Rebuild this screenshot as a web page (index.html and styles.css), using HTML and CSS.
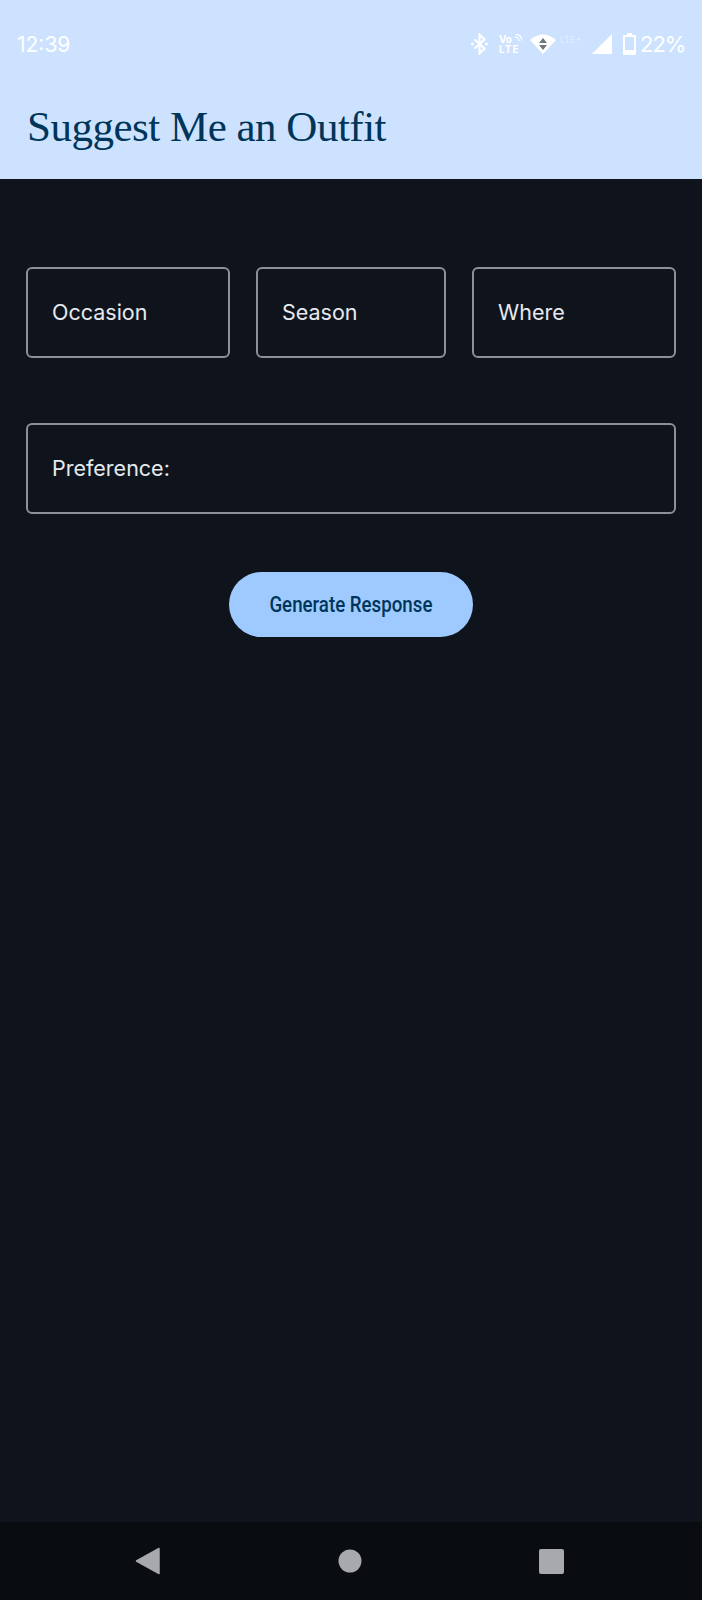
FILE: index.html
```html
<!DOCTYPE html>
<html lang="en">
<head>
  <meta charset="UTF-8">
  <title>Suggest Me an Outfit</title>
  <link rel="stylesheet" href="styles.css">
</head>
<body>

  <header class="app-header">
    <div class="status-bar">
      <span class="clock">12:39</span>
      <div class="status-icons">
        <svg class="icon-bt" width="17" height="22" viewBox="0 0 17 22"><path d="M3.500 6.500l10 9L8.500 20.500V1.500l5 5-10 9" fill="none" stroke="#fff" stroke-width="2.200"/><circle cx="1.500" cy="11" r="1.500" fill="#fff"/><circle cx="15.500" cy="11" r="1.500" fill="#fff"/></svg>
        <div class="volte">
          <span>Vo</span>
          <svg class="volte-arcs" width="8" height="8" viewBox="0 0 8 8"><path d="M1 3a4 4 0 0 1 4 4M1 0a7 7 0 0 1 7 7" fill="none" stroke="#fff" stroke-width="1.300"/></svg>
          <span class="volte-lte">LTE</span>
        </div>
        <svg class="icon-wifi" width="26" height="22" viewBox="0 0 26 22"><path d="M0 7Q13-4 26 7L13 21z" fill="#fff"/><path d="M13 5l4 5H9zM13 17l-4-5h8z" fill="#6f7780"/></svg>
        <span class="lte-small">LTE+</span>
        <svg class="icon-signal" width="20" height="22" viewBox="0 0 20 22"><path d="M20 1v20H0z" fill="#fff"/></svg>
        <svg class="icon-battery" width="13" height="22" viewBox="0 0 13 22"><path d="M4 0h5v2h3a1 1 0 0 1 1 1v18a1 1 0 0 1-1 1H1a1 1 0 0 1-1-1V3a1 1 0 0 1 1-1h3z" fill="#fff"/><rect x="2" y="4" width="9" height="13" fill="#cde2ff"/></svg>
        <span class="battery">22%</span>
      </div>
    </div>
    <h1>Suggest Me an Outfit</h1>
  </header>

  <main class="content">
    <div class="field-row">
      <div class="field field-occasion">Occasion</div>
      <div class="field field-season">Season</div>
      <div class="field field-where">Where</div>
    </div>
    <div class="field">Preference:</div>
    <button class="generate"><span class="generate-label">Generate Response</span></button>
  </main>

  <nav class="nav-bar">
    <svg width="26" height="28" viewBox="0 0 26 28"><path d="M24 1.500v25L1.500 14z" fill="#a7a9ad" stroke="#a7a9ad" stroke-width="1.500" stroke-linejoin="round"/></svg>
    <svg width="24" height="24" viewBox="0 0 24 24"><circle cx="12" cy="12" r="11.500" fill="#a7a9ad"/></svg>
    <svg width="25" height="25" viewBox="0 0 25 25"><rect width="25" height="25" rx="2" fill="#a7a9ad"/></svg>
  </nav>

</body>
</html>
```

FILE: styles.css
```css
* {
  box-sizing: border-box;
}
body {
  margin: 0;
  width: 702px;
  height: 1600px;
  display: flex;
  flex-direction: column;
  background-color: #0f141c;
  font-family: "Inter", sans-serif;
}
.app-header {
  height: 179px;
  padding: 30px 0 0;
  background-color: #cde2ff;
}
.status-bar {
  height: 28px;
  padding: 0 20px 0 17px;
  display: flex;
  justify-content: space-between;
  align-items: center;
}
.clock {
  font-size: 21px;
  color: #fff;
}
.status-icons {
  display: flex;
  align-items: center;
  color: #fff;
}
.volte {
  position: relative;
  width: 23px;
  margin-left: 11px;
  display: flex;
  flex-direction: column;
  font-size: 10px;
  line-height: 10px;
  font-weight: 700;
}
.volte-arcs {
  position: absolute;
  top: 0;
  right: 0;
}
.volte-lte {
  letter-spacing: 1px;
}
.icon-wifi {
  margin-left: 8px;
}
.lte-small {
  width: 26px;
  margin: 0 0 10px 4px;
  font-size: 9px;
  opacity: 0.45;
}
.icon-signal {
  margin-left: 6px;
}
.icon-battery {
  margin: 0 4px 0 11px;
}
.battery {
  width: 42px;
  font-size: 22px;
  letter-spacing: -1px;
}
h1 {
  margin: 44px 0 0 27px;
  font-family: "Liberation Serif", serif;
  font-weight: 400;
  font-size: 43px;
  line-height: 50px;
  letter-spacing: -0.5px;
  color: #00355a;
}
.content {
  flex: 1;
  padding: 88px 26px 0;
  display: flex;
  flex-direction: column;
}
.field-row {
  display: flex;
  gap: 26px;
  margin-bottom: 65px;
}
.field {
  height: 91px;
  padding: 0 24px 2px;
  display: flex;
  align-items: center;
  border: 2px solid #8c9199;
  border-radius: 6px;
  font-size: 21.500px;
  color: #e6e9ef;
}
.field-occasion {
  width: 204px;
}
.field-season {
  width: 190px;
}
.field-where {
  width: 204px;
}
.generate {
  margin: 58px auto 0;
  width: 244px;
  height: 65px;
  border: none;
  border-radius: 33px;
  background-color: #9ecaff;
  color: #00355a;
  font-family: "Roboto", sans-serif;
  font-size: 22px;
  font-weight: 500;
}
.generate-label {
  display: inline-block;
  transform: scaleX(0.85);
  white-space: nowrap;
}
.nav-bar {
  height: 78px;
  padding: 0 138px 0 135px;
  display: flex;
  justify-content: space-between;
  align-items: center;
  background-color: #090c10;
}
```
